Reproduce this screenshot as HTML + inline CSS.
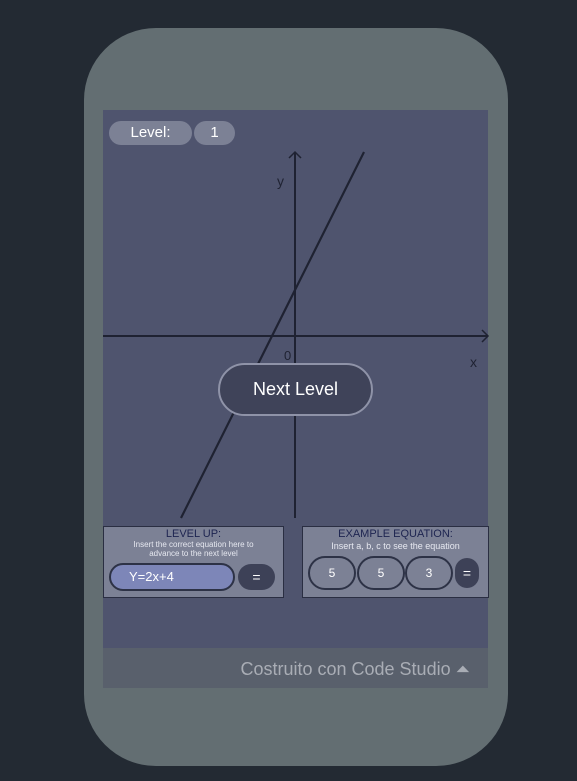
<!DOCTYPE html>
<html><head><style>
body{margin:0;width:577px;height:781px;background:#232a33;position:relative;overflow:hidden;font-family:"Liberation Sans",sans-serif}
.phone{position:absolute;left:84px;top:28px;width:424px;height:738px;border-radius:72px;background:#636e72}
.screen{position:absolute;left:103px;top:110px;width:385px;height:578px;background:#4f546e}
.foot{position:absolute;left:103px;top:648px;width:385px;height:40px;background:#59606c;color:#a9adb5;font-size:18px;line-height:42px;text-align:right;box-sizing:border-box;padding-right:18px}
.pill{position:absolute;background:#7c8195;color:#fff;border-radius:13px;text-align:center;font-size:15px;line-height:24px}
.box{position:absolute;background:#7c8195;border:1px solid #2a2e42;box-sizing:border-box;text-align:center;color:#1d2450}
.box h4{margin:2px 0 0;font-weight:normal;font-size:11px;line-height:11px}
.box p{margin:0;font-size:8px;line-height:9px;color:#e6e8f0}
.o{position:absolute;border:2px solid #2d3246;border-radius:18px;box-sizing:border-box;color:#fff;font-size:12px;text-align:center;line-height:30px;background:#7c8195}
.eq{position:absolute;background:#3d4157;color:#fff;border-radius:16px;text-align:center;font-size:14px;line-height:26px}
</style></head><body>
<div class="phone"></div>
<div class="screen"></div>
<svg style="position:absolute;left:0;top:0" width="577" height="781">
<line x1="103" y1="336" x2="488" y2="336" stroke="#1f2232" stroke-width="2"/>
<polyline points="482,330 488,336 482,342" fill="none" stroke="#1f2232" stroke-width="1.5"/>
<line x1="295" y1="152" x2="295" y2="518" stroke="#1f2232" stroke-width="2"/>
<polyline points="289,158 295,152 301,158" fill="none" stroke="#1f2232" stroke-width="1.5"/>
<line x1="364" y1="152" x2="181" y2="518" stroke="#1f2232" stroke-width="2.2"/>
<text x="277" y="186" font-size="14" fill="#1f2232" font-family="Liberation Sans">y</text>
<text x="284" y="360" font-size="13" fill="#1f2232" font-family="Liberation Sans">0</text>
<text x="470" y="367" font-size="14" fill="#1f2232" font-family="Liberation Sans">x</text>
</svg>
<div class="pill" style="left:109px;top:121px;width:83px">Level:</div>
<div class="pill" style="left:194px;top:121px;width:41px">1</div>
<div style="position:absolute;left:218px;top:363px;width:155px;height:53px;box-sizing:border-box;border:2px solid #8f93a8;border-radius:27px;background:#3f4359;color:#fff;font-size:18px;text-align:center;line-height:49px">Next Level</div>
<div class="box" style="left:103px;top:526px;width:181px;height:72px"><h4>LEVEL UP:</h4><p>Insert the correct equation here to<br>advance to the next level</p></div>
<div style="position:absolute;left:109px;top:563px;width:126px;height:28px;box-sizing:border-box;border:2px solid #2d3246;border-radius:14px;background:#7d86b8;color:#fff;font-size:13px;line-height:24px;padding-left:18px">Y=2x+4</div>
<div class="eq" style="left:238px;top:564px;width:37px">=</div>
<div class="box" style="left:302px;top:526px;width:187px;height:72px"><h4>EXAMPLE EQUATION:</h4><p style="font-size:9px;margin-top:2px">Insert a, b, c to see the equation</p></div>
<div class="o" style="left:308px;top:556px;width:48px;height:34px">5</div>
<div class="o" style="left:357px;top:556px;width:48px;height:34px">5</div>
<div class="o" style="left:405px;top:556px;width:48px;height:34px">3</div>
<div class="eq" style="left:455px;top:558px;width:24px;height:30px;line-height:30px;border-radius:12px">=</div>
<div class="foot">Costruito con Code Studio ⏶</div>
</body></html>
